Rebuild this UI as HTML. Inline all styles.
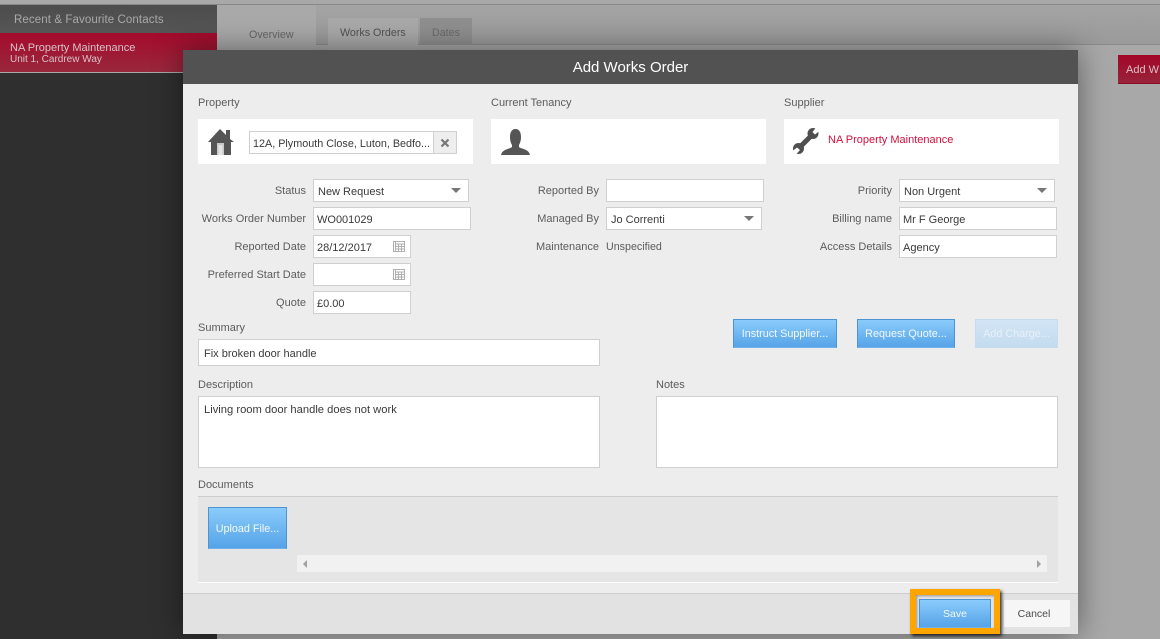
<!DOCTYPE html>
<html>
<head>
<meta charset="utf-8">
<style>
html,body{margin:0;padding:0;width:1160px;height:639px;overflow:hidden;background:#a6a6a6;font-family:"Liberation Sans",sans-serif;font-size:11px;color:#4a4a4a}
.a{position:absolute;box-sizing:border-box}
.t{position:absolute;white-space:nowrap;line-height:14px}
.l{position:absolute;white-space:nowrap;line-height:14px;text-align:right;color:#5c5c5c;margin-top:1px}
.h{position:absolute;white-space:nowrap;line-height:14px;color:#5c5c5c;margin-top:1px}
.i{position:absolute;box-sizing:border-box;background:#fff;border:1px solid #d0d0d0;color:#3a3a3a;padding-left:3px;line-height:23px;white-space:nowrap;height:23px;font-size:11px;overflow:hidden}
.b{position:absolute;box-sizing:border-box;background:linear-gradient(#8accfb,#56a3e8);border:1px solid #4d94d6;border-bottom-color:#6fb3ee;color:#f2f8fd;text-align:center;white-space:nowrap;font-size:10.8px}
.c{position:absolute;width:0;height:0;border-left:5px solid transparent;border-right:5px solid transparent;border-top:5px solid #777}
</style>
</head>
<body>
<!-- background -->
<div class="a" style="left:0;top:0;width:1160px;height:4px;background:#a8a8a8"></div>
<div class="a" style="left:0;top:4px;width:1160px;height:1px;background:#878787"></div>
<div class="a" style="left:217px;top:5px;width:943px;height:40px;background:linear-gradient(#a4a4a4,#9a9a9a)"></div>
<div class="a" style="left:217px;top:44px;width:943px;height:1px;background:#8c8c8c"></div>
<div class="a" style="left:217px;top:45px;width:943px;height:594px;background:#a8a8a8"></div>
<div class="a" style="left:217px;top:5px;width:99px;height:45px;background:#a9a9a9"></div>
<div class="t" style="left:249px;top:28px;color:#666;font-size:10.7px">Overview</div>
<div class="a" style="left:328px;top:18px;width:90px;height:32px;background:#a9a9a9"></div>
<div class="t" style="left:340px;top:26px;color:#525252;font-size:10.7px">Works Orders</div>
<div class="a" style="left:420px;top:18px;width:52px;height:27px;background:#8f8f8f"></div>
<div class="t" style="left:432px;top:26px;color:#6a6a6a;font-size:10.7px">Dates</div>
<!-- sidebar -->
<div class="a" style="left:0;top:5px;width:217px;height:634px;background:#2f2f2f"></div>
<div class="a" style="left:0;top:5px;width:217px;height:28px;background:linear-gradient(#4c4c4c,#565656)"></div>
<div class="t" style="left:14px;top:13px;color:#a9a9a9;font-size:11.5px;letter-spacing:.1px">Recent &amp; Favourite Contacts</div>
<div class="a" style="left:0;top:33px;width:217px;height:39px;background:linear-gradient(#a50a2c,#99283c)"></div>
<div class="a" style="left:0;top:72px;width:217px;height:1px;background:#a8a8a8"></div>
<div class="t" style="left:10px;top:41px;color:#d6c3c8;font-size:11px">NA Property Maintenance</div>
<div class="t" style="left:10px;top:53px;color:#d6c3c8;font-size:10px">Unit 1, Cardrew Way</div>
<!-- right button -->
<div class="a" style="left:1118px;top:55px;width:42px;height:29px;background:linear-gradient(#a30628,#98243a);border-bottom:1px solid #8a0c28"></div>
<div class="t" style="left:1126px;top:63px;color:#d8c0c6">Add W</div>
<!-- dialog -->
<div class="a" style="left:183px;top:50px;width:895px;height:584px;background:#ededed;box-shadow:0 0 28px rgba(0,0,0,.45)"></div>
<div class="a" style="left:183px;top:50px;width:895px;height:34px;background:#525252"></div>
<div class="t" style="left:183px;top:59px;width:895px;text-align:center;color:#fff;font-size:15px;line-height:18px">Add Works Order</div>

<div class="h" style="left:198px;top:95px">Property</div>
<div class="h" style="left:491px;top:95px">Current Tenancy</div>
<div class="h" style="left:784px;top:95px">Supplier</div>

<div class="a" style="left:198px;top:119px;width:275px;height:45px;background:#fff"></div>
<div class="a" style="left:491px;top:119px;width:275px;height:45px;background:#fff"></div>
<div class="a" style="left:784px;top:119px;width:275px;height:45px;background:#fff"></div>

<!-- house -->
<svg class="a" style="left:207px;top:128px" width="28" height="28" viewBox="0 0 28 28">
<path fill="#555" d="M1 14 13 1 19 7V2H23V11L27 14H24V27H4V14Z"/>
<rect x="10" y="15" width="7" height="12" fill="#c9c9c9"/>
<rect x="11.500" y="17" width="4" height="10" fill="#e3e3e3"/>
</svg>
<div class="i" style="left:249px;top:131px;width:185px;padding-left:3px;line-height:24px;font-size:10.8px">12A, Plymouth Close, Luton, Bedfo...</div>
<div class="a" style="left:433px;top:131px;width:24px;height:23px;background:#eee;border:1px solid #d0d0d0"></div>
<svg class="a" style="left:440px;top:138px" width="10" height="10" viewBox="0 0 10 10"><path d="M1.500 1.500 8.500 8.500M8.500 1.500 1.500 8.500" stroke="#777" stroke-width="2.200"/></svg>

<!-- person -->
<svg class="a" style="left:500px;top:128px" width="32" height="28" viewBox="0 0 32 28">
<path fill="#555" d="M15.500 1C19 1 21 4 21 9 21 13 20 15 19 17V19C21 21 29 21 30 27H1C2 21 10 21 12 19V17C11 15 10 13 10 9 10 4 12 1 15.500 1Z"/>
</svg>
<!-- wrench -->
<svg class="a" style="left:792px;top:127px" width="28" height="28" viewBox="0 0 28 28">
<path d="M7 21 20 8" stroke="#4f4f4f" stroke-width="5"/>
<circle cx="21" cy="6.500" r="5.500" fill="#4f4f4f"/>
<circle cx="6.500" cy="21.500" r="5.500" fill="#4f4f4f"/>
<path fill="#fff" d="M20.500 5 24.500 0 28 3.500 23 7.500ZM8 23 3.500 28 0 24.500 5 20.500Z"/>
</svg>
<div class="t" style="left:828px;top:133px;color:#d2103f;font-size:11px">NA Property Maintenance</div>

<!-- left col -->
<div class="l" style="left:190px;width:116px;top:183px">Status</div>
<div class="i" style="left:313px;top:179px;width:156px;padding-left:4px;line-height:24px">New Request</div><div class="c" style="left:451px;top:188px"></div>
<div class="l" style="left:190px;width:116px;top:211px">Works Order Number</div>
<div class="i" style="left:313px;top:207px;width:158px;line-height:24px">WO001029</div>
<div class="l" style="left:190px;width:116px;top:239px">Reported Date</div>
<div class="i" style="left:313px;top:235px;width:98px;line-height:24px">28/12/2017</div>
<div class="l" style="left:190px;width:116px;top:267px">Preferred Start Date</div>
<div class="i" style="left:313px;top:263px;width:98px"></div>
<div class="l" style="left:190px;width:116px;top:295px">Quote</div>
<div class="i" style="left:313px;top:291px;width:98px;line-height:24px">£0.00</div>
<svg class="a" style="left:393px;top:241px" width="12" height="11" viewBox="0 0 12 11"><path fill="none" stroke="#b0b0b0" d="M.5.500H11.500V10.500H.5ZM2.500.5V10.500M5.500 3V10.500M8.500 3V10.500M2.500 3H11.500M2.500 5.500H11.500M2.500 8H11.500"/></svg>
<svg class="a" style="left:393px;top:269px" width="12" height="11" viewBox="0 0 12 11"><path fill="none" stroke="#b0b0b0" d="M.5.500H11.500V10.500H.5ZM2.500.5V10.500M5.500 3V10.500M8.500 3V10.500M2.500 3H11.500M2.500 5.500H11.500M2.500 8H11.500"/></svg>

<!-- middle col -->
<div class="l" style="left:480px;width:119px;top:183px">Reported By</div>
<div class="i" style="left:606px;top:179px;width:158px"></div>
<div class="l" style="left:480px;width:119px;top:211px">Managed By</div>
<div class="i" style="left:606px;top:207px;width:156px;padding-left:4px;line-height:24px">Jo Correnti</div><div class="c" style="left:744px;top:216px"></div>
<div class="l" style="left:480px;width:119px;top:239px">Maintenance</div>
<div class="h" style="left:606px;top:239px;font-size:10.7px">Unspecified</div>

<!-- right col -->
<div class="l" style="left:780px;width:112px;top:183px">Priority</div>
<div class="i" style="left:899px;top:179px;width:156px;padding-left:4px;line-height:24px">Non Urgent</div><div class="c" style="left:1037px;top:188px"></div>
<div class="l" style="left:780px;width:112px;top:211px">Billing name</div>
<div class="i" style="left:899px;top:207px;width:158px;line-height:24px">Mr F George</div>
<div class="l" style="left:780px;width:112px;top:239px">Access Details</div>
<div class="i" style="left:899px;top:235px;width:158px;line-height:24px">Agency</div>

<!-- action buttons -->
<div class="b" style="left:733px;top:319px;width:104px;height:29px;line-height:29px">Instruct Supplier...</div>
<div class="b" style="left:857px;top:319px;width:98px;height:29px;line-height:29px">Request Quote...</div>
<div class="a" style="left:975px;top:319px;width:83px;height:29px;line-height:29px;text-align:center;background:linear-gradient(#d2e5f5,#c4dbef);border:1px solid #c5dcef;color:#e8f1f9;font-size:10.8px">Add Charge...</div>

<!-- summary etc -->
<div class="h" style="left:198px;top:320px">Summary</div>
<div class="i" style="left:198px;top:339px;width:402px;height:27px;line-height:28px;padding-left:5px">Fix broken door handle</div>
<div class="h" style="left:198px;top:377px">Description</div>
<div class="i" style="left:198px;top:396px;width:402px;height:72px;line-height:27px;padding-left:5px;font-size:11.2px">Living room door handle does not work</div>
<div class="h" style="left:656px;top:377px">Notes</div>
<div class="i" style="left:656px;top:396px;width:402px;height:72px"></div>

<!-- documents -->
<div class="h" style="left:198px;top:477px">Documents</div>
<div class="a" style="left:198px;top:496px;width:860px;height:87px;background:#e5e5e5;border-top:1px solid #cdcdcd;border-bottom:1px solid #fff"></div>
<div class="b" style="left:208px;top:507px;width:79px;height:42px;line-height:42px">Upload File...</div>
<div class="a" style="left:297px;top:555px;width:750px;height:17px;background:#f1f1f1"></div>
<div class="a" style="left:303px;top:560px;width:0;height:0;border-top:4px solid transparent;border-bottom:4px solid transparent;border-right:4px solid #a0a0a0"></div>
<div class="a" style="left:1037px;top:560px;width:0;height:0;border-top:4px solid transparent;border-bottom:4px solid transparent;border-left:4px solid #a0a0a0"></div>

<!-- footer -->
<div class="a" style="left:183px;top:593px;width:895px;height:41px;background:#e2e2e2;border-top:1px solid #cdcdcd"></div>
<div class="a" style="left:1004px;top:600px;width:66px;height:27px;background:#f6f6f6;line-height:28px;text-align:center;color:#4a4a4a;font-size:10.5px;padding-right:6px">Cancel</div>
<div class="a" style="left:910px;top:589px;width:90px;height:45px;border:6px solid #ffa500;box-shadow:2px 2px 3px rgba(0,0,0,.75),inset 1px 1px 2px rgba(0,0,0,.35)"></div>
<div class="b" style="left:919px;top:599px;width:72px;height:29px;line-height:29px;font-size:10.5px">Save</div>
</body>
</html>
